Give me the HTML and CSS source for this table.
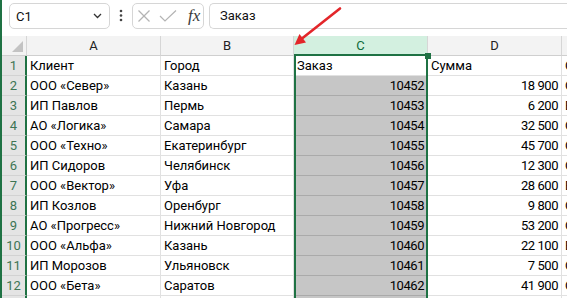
FILE: index.html
```html
<!DOCTYPE html>
<html lang="ru">
<head>
<meta charset="utf-8">
<title>Лист</title>
<link rel="stylesheet" href="styles.css">
</head>
<body>
<div class="app">
  <div class="toolbar">
    <div class="namebox">
      <span class="nb-text">C1</span>
      <svg class="chev" width="9" height="6" viewBox="0 0 9 6"><polyline points="1,1 4.5,4.5 8,1" fill="none" stroke="#333" stroke-width="1.3"/></svg>
    </div>
    <svg class="dots" width="4" height="14" viewBox="0 0 4 14"><circle cx="2" cy="2" r="1.3" fill="#444"/><circle cx="2" cy="6.5" r="1.3" fill="#444"/><circle cx="2" cy="11" r="1.3" fill="#444"/></svg>
    <div class="fbtns">
      <svg class="ic-x" width="14" height="12" viewBox="0 0 14 12"><line x1="1.5" y1="0.5" x2="12.5" y2="11.5" stroke="#b4b4b4" stroke-width="1.2"/><line x1="12.5" y1="0.5" x2="1.5" y2="11.5" stroke="#b4b4b4" stroke-width="1.2"/></svg>
      <svg class="ic-ok" width="18" height="12" viewBox="0 0 18 12"><polyline points="1,6 6,11 17,0.5" fill="none" stroke="#b4b4b4" stroke-width="1.2"/></svg>
      <span class="fx">fx</span>
    </div>
    <div class="formula">Заказ</div>
  </div>

  <div class="sheet">
    <div class="cell hd corner"><span class="tri"></span></div>
    <div class="cell hd">A</div>
    <div class="cell hd">B</div>
    <div class="cell hd on">C</div>
    <div class="cell hd">D</div>
    <div class="cell hd"></div>

    <div class="cell rn">1</div><div class="cell">Клиент</div><div class="cell">Город</div><div class="cell">Заказ</div><div class="cell">Сумма</div><div class="cell">Статус</div>
    <div class="cell rn">2</div><div class="cell">ООО «Север»</div><div class="cell">Казань</div><div class="cell r g">10452</div><div class="cell r">18 900</div><div class="cell">Оплачен</div>
    <div class="cell rn">3</div><div class="cell">ИП Павлов</div><div class="cell">Пермь</div><div class="cell r g">10453</div><div class="cell r">6 200</div><div class="cell">В работе</div>
    <div class="cell rn">4</div><div class="cell">АО «Логика»</div><div class="cell">Самара</div><div class="cell r g">10454</div><div class="cell r">32 500</div><div class="cell">Оплачен</div>
    <div class="cell rn">5</div><div class="cell">ООО «Техно»</div><div class="cell">Екатеринбург</div><div class="cell r g">10455</div><div class="cell r">45 700</div><div class="cell">Оплачен</div>
    <div class="cell rn">6</div><div class="cell">ИП Сидоров</div><div class="cell">Челябинск</div><div class="cell r g">10456</div><div class="cell r">12 300</div><div class="cell">Оплачен</div>
    <div class="cell rn">7</div><div class="cell">ООО «Вектор»</div><div class="cell">Уфа</div><div class="cell r g">10457</div><div class="cell r">28 600</div><div class="cell">В работе</div>
    <div class="cell rn">8</div><div class="cell">ИП Козлов</div><div class="cell">Оренбург</div><div class="cell r g">10458</div><div class="cell r">9 800</div><div class="cell">Оплачен</div>
    <div class="cell rn">9</div><div class="cell">АО «Прогресс»</div><div class="cell">Нижний Новгород</div><div class="cell r g">10459</div><div class="cell r">53 200</div><div class="cell">Оплачен</div>
    <div class="cell rn">10</div><div class="cell">ООО «Альфа»</div><div class="cell">Казань</div><div class="cell r g">10460</div><div class="cell r">22 100</div><div class="cell">В работе</div>
    <div class="cell rn">11</div><div class="cell">ИП Морозов</div><div class="cell">Ульяновск</div><div class="cell r g">10461</div><div class="cell r">7 500</div><div class="cell">Оплачен</div>
    <div class="cell rn">12</div><div class="cell">ООО «Бета»</div><div class="cell">Саратов</div><div class="cell r g">10462</div><div class="cell r">41 900</div><div class="cell">Оплачен</div>
    <div class="cell rn">13</div><div class="cell">ИП Орлов</div><div class="cell">Пенза</div><div class="cell r g">10463</div><div class="cell r">15 400</div><div class="cell">Оплачен</div>
  </div>

  <div class="selection"></div>
  <div class="handle"></div>

  <svg class="arrow" width="567" height="60" viewBox="0 0 567 60">
    <line x1="340" y1="8.5" x2="302" y2="38.5" stroke="#e3262a" stroke-width="2.6" stroke-linecap="round"/>
    <polygon points="294.5,45 306,42.5 299.5,34" fill="#e3262a"/>
  </svg>
</div>
</body>
</html>
```

FILE: styles.css
```css
html, body {
  margin: 0;
  padding: 0;
}

body {
  width: 567px;
  height: 298px;
  overflow: hidden;
  background: #ffffff;
  font-family: Roboto, "Liberation Sans", Arial, sans-serif;
  color: #000;
}

.app {
  position: relative;
  height: 298px;
  border-left: 2px solid #1f7244;
  overflow: hidden;
}

/* ---------- toolbar ---------- */
.toolbar {
  height: 36px;
  box-sizing: border-box;
  display: flex;
  align-items: flex-start;
  padding: 3px 0 0 7px;
  background: #fff;
}

.namebox {
  width: 101px;
  height: 26px;
  box-sizing: border-box;
  border: 1px solid #d6d6d6;
  border-radius: 5px;
  display: flex;
  align-items: center;
  justify-content: space-between;
  padding: 0 7px 0 6px;
  font-size: 13px;
  color: #111;
}

.chev {
  display: block;
}

.dots {
  display: block;
  margin: 6px 0 0 9px;
}

.fbtns {
  width: 72px;
  height: 26px;
  box-sizing: border-box;
  margin-left: 9px;
  border: 1px solid #d6d6d6;
  border-radius: 5px;
  display: flex;
  align-items: center;
  padding-left: 4px;
}

.ic-x {
  display: block;
}

.ic-ok {
  display: block;
  margin-left: 8px;
}

.fx {
  margin-left: 11px;
  font-family: "Liberation Serif", "DejaVu Serif", serif;
  font-style: italic;
  font-size: 17px;
  color: #3a3a3a;
  line-height: 1;
  margin-top: -2px;
}

.formula {
  flex: 1;
  height: 26px;
  box-sizing: border-box;
  margin-left: 5px;
  border: 1px solid #d6d6d6;
  border-right: none;
  border-radius: 5px 0 0 5px;
  padding-left: 10px;
  font-size: 13px;
  line-height: 24px;
  color: #111;
}

/* ---------- sheet ---------- */
.sheet {
  display: grid;
  grid-template-columns: 25px 134px 133px 134px 134px 1fr;
  grid-auto-rows: 20px;
}

.cell {
  box-sizing: border-box;
  border-right: 1px solid #e1e1e1;
  border-bottom: 1px solid #e1e1e1;
  padding: 1px 3px 0;
  font-size: 13px;
  line-height: 18px;
  white-space: nowrap;
  overflow: hidden;
  color: #000;
}

.hd {
  background: #f3f3f3;
  border-right-color: #d6d6d6;
  border-bottom-color: #cfcfcf;
  text-align: center;
  padding: 0;
  line-height: 19px;
  color: #222;
}

.hd.on {
  background: #d3f0e0;
  color: #0f6b3a;
}

.corner {
  position: relative;
}

.tri {
  position: absolute;
  right: 3px;
  bottom: 3px;
  width: 0;
  height: 0;
  border-left: 11px solid transparent;
  border-bottom: 11px solid #c3c3c3;
}

.rn {
  background: #e4e4e4;
  border-right: 2px solid #1f7244;
  border-bottom-color: #d2d2d2;
  text-align: center;
  padding: 1px 0 0;
  color: #3d7554;
}

.r {
  text-align: right;
  letter-spacing: -0.45px;
}

.g {
  background: #c6c6c6;
  border-bottom-color: #aaaaaa;
}

/* ---------- overlays ---------- */
.selection {
  position: absolute;
  left: 292px;
  top: 54px;
  width: 134px;
  height: 260px;
  box-sizing: border-box;
  border: 2px solid #1f7244;
  pointer-events: none;
}

.handle {
  position: absolute;
  left: 423px;
  top: 53px;
  width: 6px;
  height: 6px;
  background: #1f7244;
}

.arrow {
  position: absolute;
  left: -2px;
  top: 0;
  pointer-events: none;
}
```
